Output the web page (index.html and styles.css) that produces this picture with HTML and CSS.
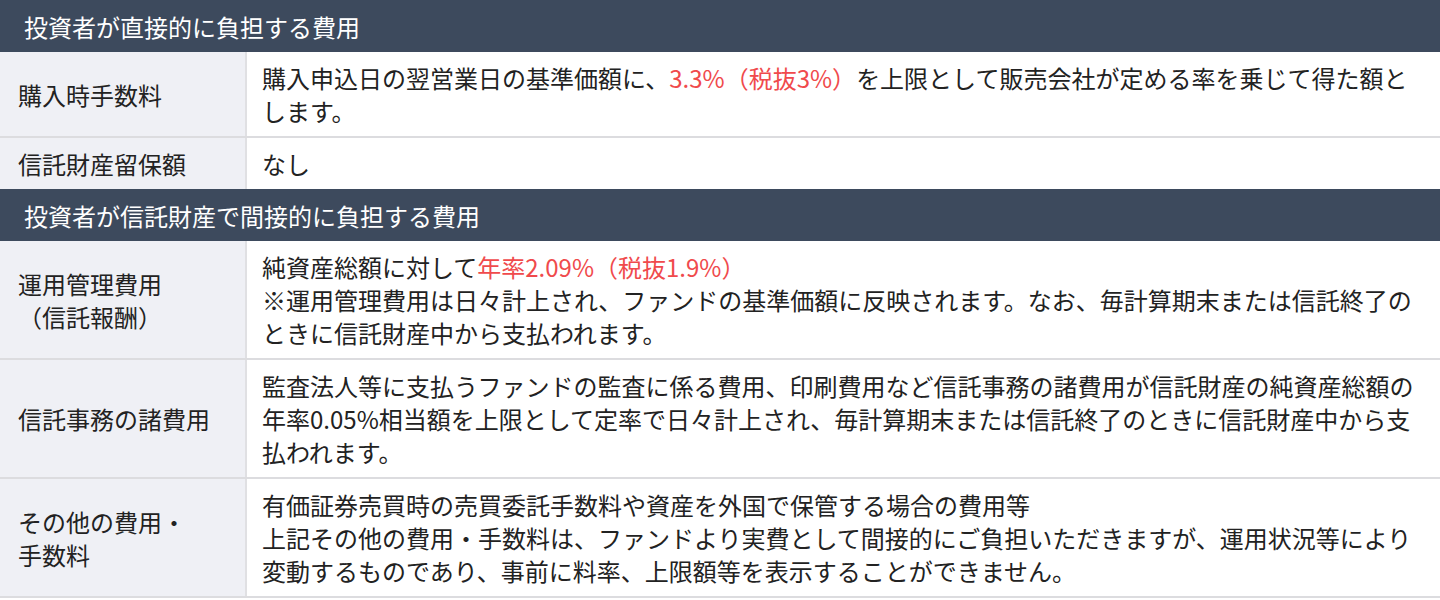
FILE: index.html
```html
<!DOCTYPE html>
<html lang="ja">
<head>
<meta charset="utf-8">
<title>費用</title>
<link rel="stylesheet" href="styles.css">
</head>
<body>
<div class="fees">
  <div class="section-head">投資者が直接的に負担する費用</div>
  <div class="row">
    <div class="label">購入時手数料</div>
    <div class="content">購入申込日の翌営業日の基準価額に、<span class="red">3.3%（税抜3%）</span>を上限として販売会社が定める率を乗じて得た額とします。</div>
  </div>
  <div class="row last">
    <div class="label">信託財産留保額</div>
    <div class="content">なし</div>
  </div>
  <div class="section-head">投資者が信託財産で間接的に負担する費用</div>
  <div class="row">
    <div class="label">運用管理費用<br>（信託報酬）</div>
    <div class="content">純資産総額に対して<span class="red">年率2.09%（税抜1.9%）</span><br>※運用管理費用は日々計上され、ファンドの基準価額に反映されます。なお、毎計算期末または信託終了のときに信託財産中から支払われます。</div>
  </div>
  <div class="row">
    <div class="label">信託事務の諸費用</div>
    <div class="content">監査法人等に支払うファンドの監査に係る費用、印刷費用など信託事務の諸費用が信託財産の純資産総額の年率0.05%相当額を上限として定率で日々計上され、毎計算期末または信託終了のときに信託財産中から支払われます。</div>
  </div>
  <div class="row">
    <div class="label">その他の費用・<br>手数料</div>
    <div class="content">有価証券売買時の売買委託手数料や資産を外国で保管する場合の費用等<br>上記その他の費用・手数料は、ファンドより実費として間接的にご負担いただきますが、運用状況等により変動するものであり、事前に料率、上限額等を表示することができません。</div>
  </div>
</div>
</body>
</html>
```

FILE: styles.css
```css
html, body {
  margin: 0;
  padding: 0;
  background: #ffffff;
}
body {
  font-family: "Noto Sans CJK JP", "Noto Sans", sans-serif;
  font-size: 24px;
  line-height: 33px;
  color: #222222;
}
.fees {
  display: flex;
  flex-direction: column;
}
.section-head {
  background: #3d4a5d;
  color: #ffffff;
  height: 52px;
  padding: 0 24px;
  display: flex;
  align-items: center;
}
.row {
  display: grid;
  grid-template-columns: 247px 1fr;
  border-bottom: 2px solid #dcdcdf;
}
.row.last {
  border-bottom: none;
}
.label {
  background: #eff0f5;
  border-right: 2px solid #e0e0e3;
  padding: 9px 18px;
  display: flex;
  align-items: center;
}
.content {
  padding: 9px 18px 9px 15px;
}
.red {
  color: #f04a4c;
}
```
